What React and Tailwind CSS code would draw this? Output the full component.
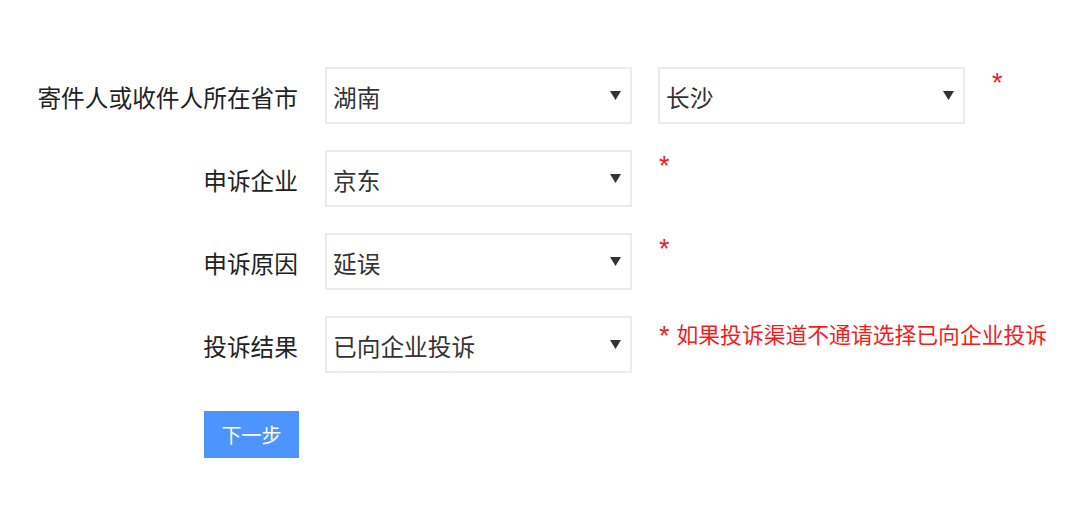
import React from 'react';

const font = { fontFamily: '"Noto Sans CJK SC", "Noto Sans", sans-serif' };
const starFont = { fontFamily: '"Liberation Sans", Arial, sans-serif' };

const Caret = () => (
  <svg width="11" height="9" viewBox="0 0 11 9" aria-hidden="true">
    <path d="M0 0 H11 L5.5 9 Z" fill="#333" />
  </svg>
);

const FakeSelect = ({ value }) => (
  <div className="w-[307px] h-[57px] flex items-center justify-between border-2 border-[#ebebeb] bg-white pl-[6px] pr-[9px] text-[23.7px] text-[#333]">
    <span className="pt-[4px]">{value}</span>
    <Caret />
  </div>
);

const Star = ({ className = '' }) => (
  <span
    className={`text-[#f51c1c] text-[27px] leading-[32px] ${className}`}
    style={starFont}
  >
    *
  </span>
);

const Row = ({ label, children }) => (
  <div className="flex items-start">
    <label className="w-[298px] h-[57px] flex items-center justify-end pt-[4px] text-[23.7px] text-[#222]">
      {label}
    </label>
    <div className="ml-[27px] flex items-start gap-[26px]">{children}</div>
  </div>
);

export default function App() {
  return (
    <div className="w-[1080px] h-[511px] bg-white" style={font}>
      <form className="pt-[67px] flex flex-col gap-[26px]">
        {/* province / city */}
        <Row label="寄件人或收件人所在省市">
          <FakeSelect value="湖南" />
          <FakeSelect value="长沙" />
          <Star className="ml-[1px]" />
        </Row>

        <Row label="申诉企业">
          <FakeSelect value="京东" />
          <Star className="ml-[1px]" />
        </Row>

        <Row label="申诉原因">
          <FakeSelect value="延误" />
          <Star className="ml-[1px]" />
        </Row>

        <Row label="投诉结果">
          <FakeSelect value="已向企业投诉" />
          <div className="ml-[1px] flex items-start">
            <Star className="mt-[4px]" />
            <span className="ml-[7px] pt-[1px] text-[#f51c1c] text-[21.8px] leading-[34px]">
              如果投诉渠道不通请选择已向企业投诉
            </span>
          </div>
        </Row>

        <div className="pl-[204px] pt-[12px]">
          <button
            type="button"
            className="w-[95px] h-[47px] bg-[#4d94ff] text-white text-[20px]"
          >
            下一步
          </button>
        </div>
      </form>
    </div>
  );
}
